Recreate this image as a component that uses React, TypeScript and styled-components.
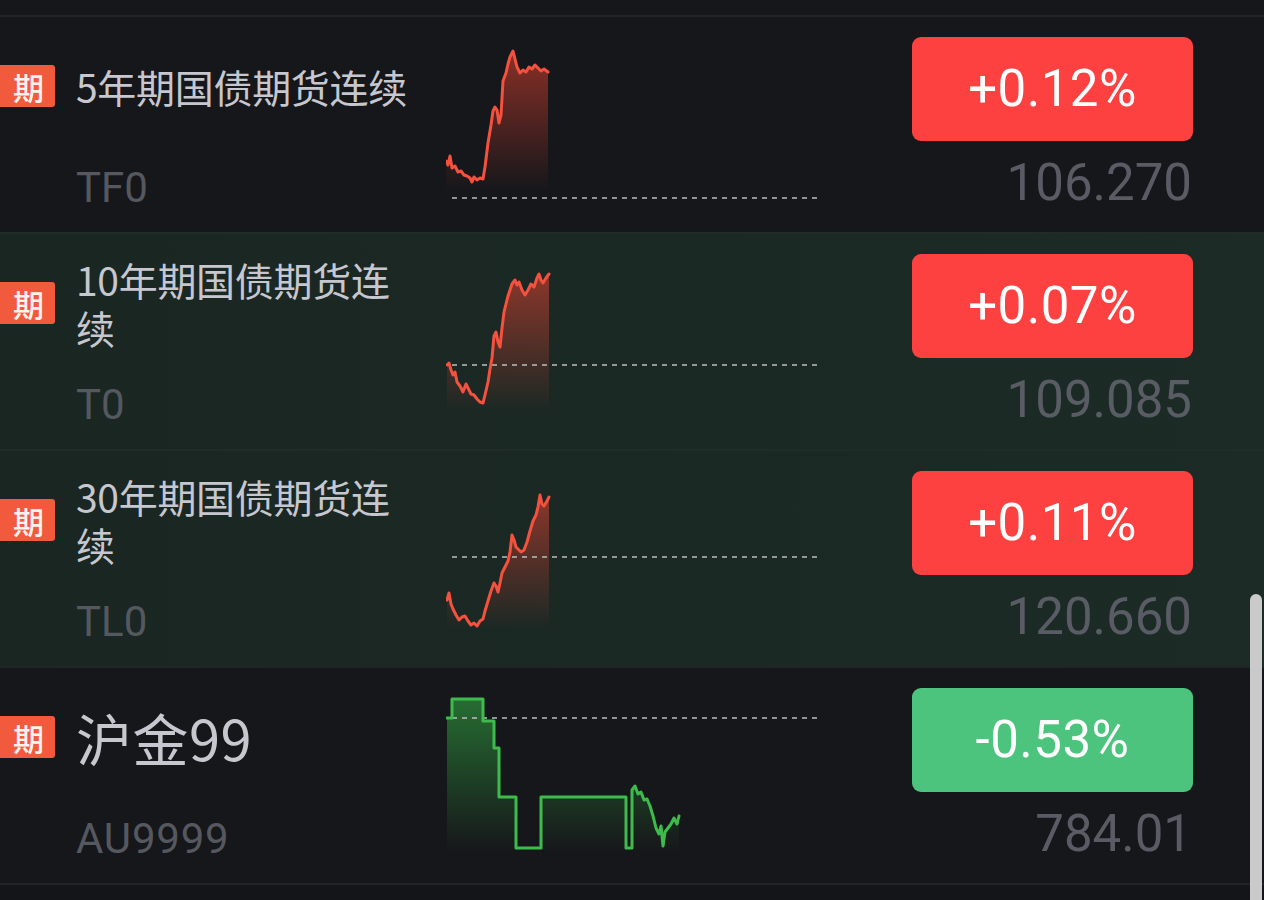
import React from "react";
import styled, { createGlobalStyle } from "styled-components";

const Global = createGlobalStyle`
  html, body { margin: 0; padding: 0; background: #16171a; }
  body { width: 1264px; height: 900px; overflow: hidden; }
  * { box-sizing: border-box; }
`;

const Page = styled.div`
  position: relative;
  width: 1264px;
  height: 900px;
  background: #16171a;
  padding-top: 15px;
  overflow: hidden;
`;

const List = styled.div`
  display: flex;
  flex-direction: column;
`;

const Row = styled.div<{ $hl?: boolean }>`
  display: flex;
  height: 217px;
  border-top: 2px solid ${(p) => (p.$hl ? "#1f2c28" : "#222428")};
  background: ${(p) => (p.$hl ? "linear-gradient(90deg, #1a2622 0%, #1b2925 60%, #1c2b26 100%)" : "#16171a")};
`;

const Tail = styled.div`
  border-top: 2px solid #222428;
  height: 20px;
  background: #141518;
`;

const BadgeCol = styled.div`
  width: 55px;
  padding-top: 48px;
  flex: none;
`;

const Badge = styled.div`
  width: 55px;
  height: 42px;
  background: #f25a3d;
  border-radius: 0 3px 3px 0;
  color: #fff3ef;
  font-family: "Noto Sans CJK SC", sans-serif;
  font-size: 31px;
  line-height: 1;
  font-weight: 500;
  display: flex;
  align-items: center;
  justify-content: center;
  padding-left: 2px;
`;

const Info = styled.div`
  width: 370px;
  margin-left: 21px;
  flex: none;
  display: flex;
  flex-direction: column;
`;

const NameWrap = styled.div`
  height: 138px;
  display: flex;
  align-items: center;
`;

const Name = styled.div<{ $big?: boolean }>`
  max-width: 342px;
  font-family: "Noto Sans CJK SC", sans-serif;
  font-size: ${(p) => (p.$big ? "56px" : "39px")};
  line-height: ${(p) => (p.$big ? "60px" : "48px")};
  color: #c6c7cf;
  letter-spacing: ${(p) => (p.$big ? "0.5px" : "-0.3px")};
`;

const Code = styled.div<{ $wide?: boolean }>`
  margin-top: 12px;
  font-family: Roboto, "Liberation Sans", sans-serif;
  font-size: 42px;
  line-height: 1;
  color: #55585f;
  letter-spacing: ${(p) => (p.$wide ? "0.8px" : "0px")};
`;

const Chart = styled.svg`
  width: 374px;
  height: 215px;
  flex: none;
  display: block;
`;

const Spacer = styled.div`
  flex: 1;
`;

const Quote = styled.div`
  width: 281px;
  margin-right: 71px;
  padding-top: 20px;
  flex: none;
  display: flex;
  flex-direction: column;
  align-items: stretch;
`;

const ChangeBox = styled.div<{ $up: boolean }>`
  height: 104px;
  border-radius: 9px;
  background: ${(p) => (p.$up ? "#fd4040" : "#4cc47e")};
  color: #ffffff;
  font-family: Roboto, "Liberation Sans", sans-serif;
  font-size: 51px;
  letter-spacing: 0.5px;
  display: flex;
  align-items: center;
  justify-content: center;
  padding-bottom: 2px;
`;

const Price = styled.div`
  margin-top: 16px;
  font-family: Roboto, "Liberation Sans", sans-serif;
  font-size: 51px;
  line-height: 1;
  text-align: right;
  color: #595c64;
  padding-right: 1px;
`;

const ScrollThumb = styled.div`
  position: absolute;
  right: 2px;
  top: 594px;
  width: 12px;
  height: 320px;
  background: #cacaca;
  border-radius: 6px 6px 0 0;
`;

type Pt = [number, number];

interface Item {
  name: string;
  big?: boolean;
  code: string;
  change: string;
  price: string;
  up: boolean;
  hl?: boolean;
  base: number;
  bottom: number;
  pts: Pt[];
}

const items: Item[] = [
  {
    name: "5年期国债期货连续",
    code: "TF0",
    change: "+0.12%",
    price: "106.270",
    up: true,
    base: 183,
    bottom: 175,
    pts: [
      [446, 146], [448, 150], [450, 141], [452, 153], [455, 151], [458, 157], [461, 156], [464, 160],
      [467, 161], [470, 163], [472, 167], [474, 162], [477, 165], [480, 163], [483, 164], [485, 152],
      [488, 128], [491, 110], [493, 96], [495, 92], [497, 95], [499, 108], [501, 100], [503, 66],
      [506, 58], [508, 49], [510, 42], [513, 36], [515, 44], [517, 52], [520, 58], [523, 55],
      [526, 57], [529, 52], [532, 54], [535, 50], [538, 53], [541, 56], [544, 54], [548, 57],
    ],
  },
  {
    name: "10年期国债期货连续",
    code: "T0",
    change: "+0.07%",
    price: "109.085",
    up: true,
    hl: true,
    base: 133,
    bottom: 180,
    pts: [
      [447, 133], [449, 131], [451, 138], [453, 143], [455, 140], [457, 150], [460, 154], [463, 160],
      [466, 152], [468, 156], [471, 162], [474, 163], [477, 167], [480, 170], [483, 171], [485, 163],
      [488, 150], [490, 137], [492, 126], [494, 104], [496, 100], [498, 110], [500, 115], [502, 96],
      [504, 80], [506, 72], [508, 64], [510, 58], [512, 52], [515, 48], [517, 53], [519, 50],
      [522, 58], [525, 63], [528, 58], [531, 52], [534, 55], [537, 46], [539, 42], [541, 48],
      [543, 51], [546, 46], [549, 42],
    ],
  },
  {
    name: "30年期国债期货连续",
    code: "TL0",
    change: "+0.11%",
    price: "120.660",
    up: true,
    hl: true,
    base: 108,
    bottom: 180,
    pts: [
      [447, 151], [449, 144], [451, 155], [453, 160], [456, 166], [459, 171], [462, 168], [465, 167],
      [468, 172], [471, 176], [474, 174], [477, 177], [480, 172], [483, 170], [485, 162], [488, 152],
      [491, 142], [494, 134], [496, 137], [498, 143], [500, 134], [502, 124], [505, 118], [508, 112],
      [510, 103], [512, 86], [514, 91], [516, 98], [518, 100], [521, 103], [524, 101], [527, 93],
      [530, 82], [533, 72], [536, 66], [538, 58], [540, 46], [542, 55], [544, 57], [547, 52], [549, 48],
    ],
  },
  {
    name: "沪金99",
    big: true,
    code: "AU9999",
    change: "-0.53%",
    price: "784.01",
    up: false,
    base: 52,
    bottom: 186,
    pts: [
      [447, 52], [452, 52], [452, 33], [483, 33], [483, 55], [494, 55], [494, 82], [499, 82],
      [499, 131], [516, 131], [516, 182], [541, 182], [541, 131], [626, 131], [626, 182], [632, 182],
      [632, 124], [635, 120], [638, 128], [641, 126], [644, 134], [647, 133], [650, 140], [653, 150],
      [656, 162], [659, 168], [661, 160], [663, 180], [665, 166], [668, 162], [671, 158], [674, 152],
      [677, 158], [679, 150],
    ],
  },
];

const Spark: React.FC<{ item: Item; id: string }> = ({ item, id }) => {
  const line = item.pts.map((p) => p.join(",")).join(" ");
  const first = item.pts[0];
  const last = item.pts[item.pts.length - 1];
  const fill = `${line} ${last[0]},${item.bottom} ${first[0]},${item.bottom}`;
  const color = item.up ? "#f4523e" : "#3dbb4c";
  const fillColor = item.up ? "#d8402f" : "#2f9b3e";
  const top = Math.min(...item.pts.map((p) => p[1]));
  return (
    <Chart viewBox="446 2 374 215" preserveAspectRatio="none">
      <defs>
        <linearGradient id={id} x1="0" y1={top} x2="0" y2={item.bottom} gradientUnits="userSpaceOnUse">
          <stop offset="0" stopColor={fillColor} stopOpacity={item.up ? 0.6 : 0.65} />
          <stop offset="1" stopColor={fillColor} stopOpacity={0} />
        </linearGradient>
      </defs>
      <polygon points={fill} fill={`url(#${id})`} />
      <line
        x1={452}
        y1={item.base}
        x2={817}
        y2={item.base}
        stroke="#bdbdbd"
        strokeOpacity={0.75}
        strokeWidth={2}
        strokeDasharray="5 5"
      />
      <polyline points={line} fill="none" stroke={color} strokeWidth={3} strokeLinejoin="round" strokeLinecap="round" />
    </Chart>
  );
};

export default function App() {
  return (
    <>
      <Global />
      <Page>
        <List>
          {items.map((it, i) => (
            <Row key={it.code} $hl={it.hl}>
              <BadgeCol>
                <Badge>期</Badge>
              </BadgeCol>
              <Info>
                <NameWrap>
                  <Name $big={it.big}>{it.name}</Name>
                </NameWrap>
                <Code $wide={it.big}>{it.code}</Code>
              </Info>
              <Spark item={it} id={`g${i}`} />
              <Spacer />
              <Quote>
                <ChangeBox $up={it.up}>{it.change}</ChangeBox>
                <Price>{it.price}</Price>
              </Quote>
            </Row>
          ))}
          <Tail />
        </List>
        <ScrollThumb />
      </Page>
    </>
  );
}
